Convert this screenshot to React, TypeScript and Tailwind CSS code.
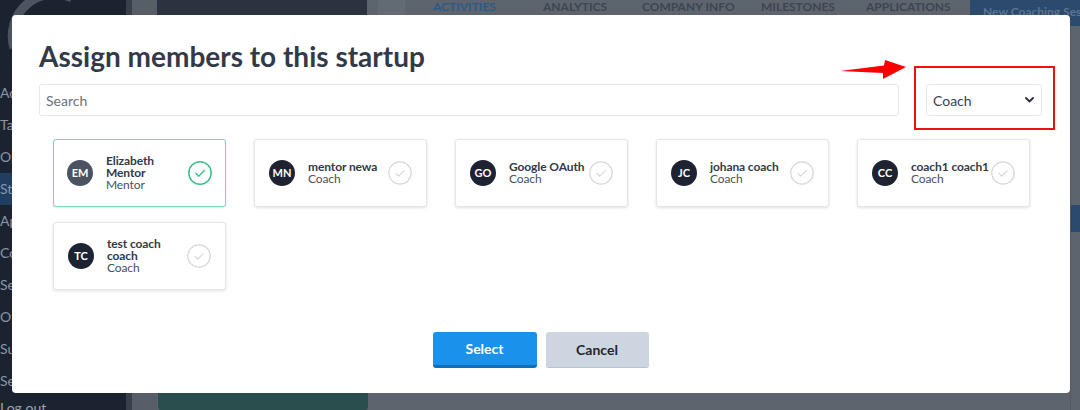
import React from "react";

type Member = { initials: string; name: string; role: string; selected?: boolean; light?: boolean };

const members: Member[] = [
  { initials: "EM", name: "Elizabeth Mentor", role: "Mentor", selected: true, light: true },
  { initials: "MN", name: "mentor newa", role: "Coach" },
  { initials: "GO", name: "Google OAuth", role: "Coach" },
  { initials: "JC", name: "johana coach", role: "Coach" },
  { initials: "CC", name: "coach1 coach1", role: "Coach" },
  { initials: "TC", name: "test coach coach", role: "Coach" },
];

function CheckCircle({ on }: { on?: boolean }) {
  const c = on ? "#3cbf8b" : "#d3d6da";
  return (
    <svg width="24" height="24" viewBox="0 0 24 24" className="shrink-0">
      <circle cx="12" cy="12" r="11.2" fill="none" stroke={c} strokeWidth={on ? 1.5 : 1.2} />
      <path d="M7.8 12.3l2.9 2.9 5.6-5.6" fill="none" stroke={c} strokeWidth={on ? 1.4 : 1.1} strokeLinecap="round" strokeLinejoin="round" />
    </svg>
  );
}

function MemberCard({ m }: { m: Member }) {
  return (
    <div
      className={
        m.selected
          ? "flex items-center h-[68px] pl-[13px] pr-[13px] rounded-[3px] bg-white border-[1.5px] border-[#7fd0c5] shadow-[0_1px_2px_rgba(0,0,0,0.10)]"
          : "flex items-center h-[68px] pl-[14px] pr-[14px] rounded-[3px] bg-white border border-[#e4e6e9] shadow-[0_1px_3px_rgba(0,0,0,0.12)]"
      }
    >
      <div
        className={
          m.light
            ? "w-[26px] h-[26px] rounded-full shrink-0 flex items-center justify-center bg-[#4b5261] text-white text-[11px] font-bold"
            : "w-[26px] h-[26px] rounded-full shrink-0 flex items-center justify-center bg-[#1d2330] text-white text-[11px] font-bold"
        }
      >
        {m.initials}
      </div>
      <div className="ml-[13px] flex-1 min-w-0 text-[12px] leading-[12px] tracking-[-0.1px]">
        <div className="font-bold text-[#333a47]">{m.name}</div>
        <div className="text-[#4a5160]">{m.role}</div>
      </div>
      <CheckCircle on={m.selected} />
    </div>
  );
}

const sideItems = ["Activities", "Tasks", "Opportunities", "Startups", "Applications", "Coaches", "Sessions", "Other", "Support", "Settings"];
const tabs: { t: string; cls: string }[] = [
  { t: "ACTIVITIES", cls: "w-[110px] text-[#2a5a8c]" },
  { t: "ANALYTICS", cls: "w-[99px]" },
  { t: "COMPANY INFO", cls: "w-[119px]" },
  { t: "MILESTONES", cls: "w-[105px]" },
  { t: "APPLICATIONS", cls: "w-[100px]" },
];

export default function App() {
  return (
    <div className="relative w-[1080px] h-[410px] overflow-hidden bg-[#5d646e] font-['Lato','Open_Sans',sans-serif]">
      {/* Background page (dimmed) */}
      <div className="flex h-full">
        <aside className="relative w-[126px] shrink-0 bg-[#1c2330] flex flex-col pt-[77px] text-[14px] text-[#8c95a3]">
          <svg className="absolute left-0 top-0" width="126" height="70" viewBox="0 0 126 70">
            <path d="M14 48 A42 42 0 0 1 72 -2" fill="none" stroke="#4d5461" strokeWidth="9" />
          </svg>
          {sideItems.map((s, i) => (
            <div
              key={i}
              className={i === 3 ? "h-[32px] leading-[32px] bg-[#1f3e62] whitespace-nowrap" : "h-[32px] leading-[32px] whitespace-nowrap"}
            >
              {s}
            </div>
          ))}
          <div className="h-[32px] leading-[22px] whitespace-nowrap text-[#9aa2ad]">Log out</div>
        </aside>
        <div className="w-[6px] shrink-0 bg-[#39404b]" />
        <div className="w-[25px] shrink-0 bg-[#585e68]" />
        <main className="flex-1 flex flex-col">
          <div className="flex h-[26px] items-start">
            <div className="w-[210px] h-[15px] bg-[#2b3240]" />
            <div className="w-[11px]" />
            <div className="w-[27px] h-[15px] bg-[#646a73]" />
            <div className="flex ml-[28px] text-[12px] font-bold leading-[12px] text-[#3e4551] mt-[1px] whitespace-nowrap">
              {tabs.map((t) => (
                <span key={t.t} className={t.cls}>
                  {t.t}
                </span>
              ))}
            </div>
            <div className="ml-auto w-[110px] h-[26px] bg-[#2b4a6c] text-[#5c7494] text-[12px] font-bold pl-[13px] pt-[3px] whitespace-nowrap overflow-hidden">
              New Coaching Session
            </div>
          </div>
          <div className="flex-1 flex">
            <div className="flex-1 flex flex-col justify-end">
              <div className="ml-[1px] w-[210px] h-[20px] bg-[#2a4d4e] rounded-[3px]" />
            </div>
            <div className="w-[10px] flex flex-col pt-[179px] border-l border-[#535a63]">
              <div className="h-[27px] bg-[#2b4a6c]" />
            </div>
          </div>
        </main>
      </div>

      {/* Modal */}
      <div className="absolute left-[12px] top-[15px] w-[1058px] h-[378px] bg-white rounded-[4px] pt-[25px] pl-[27px] pr-[28px]">
        <h1 className="text-[28px] leading-[32px] font-bold text-[#333a47]">Assign members to this startup</h1>
        <div className="mt-[12px] flex gap-[27px]">
          <div className="flex-1 h-[32px] border border-[#e6e8eb] rounded-[3px] pl-[6px] flex items-center text-[14px] text-[#6b717c]">
            Search
          </div>
          <div className="w-[116px] h-[32px] border border-[#e6e8eb] rounded-[3px] pl-[6px] pr-[7px] flex items-center justify-between text-[14px] text-[#3b4250]">
            <span>Coach</span>
            <svg width="9" height="6" viewBox="0 0 9 6">
              <path d="M1 1l3.5 3.5L8 1" fill="none" stroke="#2a303c" strokeWidth="1.8" strokeLinecap="round" strokeLinejoin="round" />
            </svg>
          </div>
        </div>
        <div className="mt-[23px] ml-[14px] grid grid-cols-[repeat(5,173px)] gap-x-[28px] gap-y-[15px]">
          {members.map((m) => (
            <MemberCard key={m.initials} m={m} />
          ))}
        </div>
        <div className="mt-[42px] flex justify-center gap-[9px]">
          <button className="w-[104px] h-[36px] bg-[#1a91eb] border-b-[3px] border-[#0f6fb8] rounded-[3px] text-white font-bold text-[14px]">
            Select
          </button>
          <button className="w-[103px] h-[36px] bg-[#cdd6e0] border-b border-[#b9c3ce] rounded-[3px] text-[#1f2530] font-bold text-[14px]">
            Cancel
          </button>
        </div>
      </div>

      {/* Annotation: red box and arrow */}
      <div className="absolute left-[914px] top-[66px] w-[141px] h-[64px] border-2 border-[#ee1111]" />
      <svg className="absolute left-0 top-0 pointer-events-none" width="1080" height="410" viewBox="0 0 1080 410">
        <polygon points="840,71 884,65.5 885,60 906,67 883,79 883,73" fill="#ff0000" />
      </svg>
    </div>
  );
}
